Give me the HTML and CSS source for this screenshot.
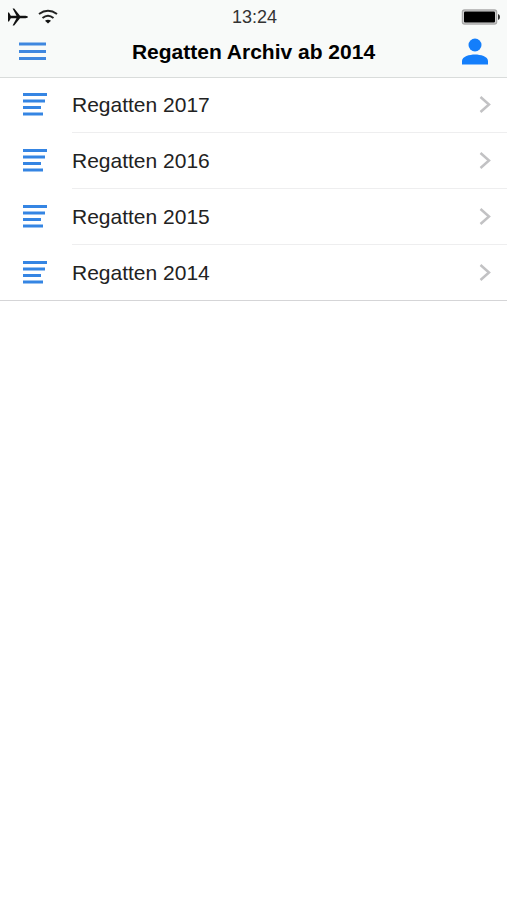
FILE: index.html
```html
<!DOCTYPE html>
<html lang="de">
<head>
  <meta charset="UTF-8">
  <meta name="viewport" content="width=device-width, initial-scale=1">
  <title>Regatten Archiv ab 2014</title>
  <link rel="stylesheet" href="styles.css">
</head>
<body>
<header class="header">
  <div class="statusbar">
    <div class="status-left">
      <svg width="20" height="18" viewBox="0 0 20 18" fill="#111"><path d="M0 4.500h1L2.800 7.800h5.700L4.600.500h1.600L12 7.800h5.500q2.500.3 2.500 1.200t-2.500 1.200H12L6.200 17.500H4.600l3.900-7.300H2.800L1 13.500H0z"/></svg>
      <svg width="20" height="16" viewBox="0 0 20 16" fill="none" stroke="#222" stroke-width="2"><path d="M1 5Q10-1.500 19 5M4.500 9Q10 4.500 15.500 9"/><path d="M10 14.500L7 11.800Q10 9.500 13 11.800z" fill="#111" stroke="none"/></svg>
    </div>
    <div class="time">13:24</div>
    <div class="status-right">
      <svg width="40" height="16" viewBox="0 0 40 16"><rect x="1.500" y="1" width="34" height="14" rx="2" fill="#ddd" stroke="#aaa" stroke-width="1.500"/><rect x="3" y="2.500" width="31" height="11" rx="1" fill="#000"/><path d="M37 5q2 .5 2 3t-2 3z" fill="#333"/></svg>
    </div>
  </div>
  <div class="navbar">
    <button type="button" class="nav-btn" aria-label="Menü">
      <svg width="28" height="28" viewBox="0 0 28 28" stroke="#3f87df" stroke-width="3"><path d="M1 6h27M1 13.500h27M1 20.500h27"/></svg>
    </button>
    <h1 class="title">Regatten Archiv ab 2014</h1>
    <button type="button" class="nav-btn" aria-label="Profil">
      <svg width="28" height="28" viewBox="0 0 28 28" fill="#147efb"><circle cx="14" cy="7" r="6.500"/><path d="M1 26.500V23C1 18.500 8.500 16.500 14 16.500s13 2 13 6.500v3.500z"/></svg>
    </button>
  </div>
</header>

<!-- gemeinsames Symbol der Listeneinträge -->
<svg class="symbols" aria-hidden="true">
  <symbol id="list-icon" viewBox="0 0 26 26"><path d="M1 2.500h24M1 9h22M1 15.500h18M1 22h20" stroke="#3585e3" stroke-width="3"/></symbol>
  <symbol id="chevron" viewBox="0 0 12 18"><path d="M1.500 1L10 8.500 1.500 16" fill="none" stroke="#c2c2c4" stroke-width="2.500"/></symbol>
</svg>

<ul class="list">
  <li>
    <a class="item" href="#2017">
      <svg class="item-icon"><use href="#list-icon"/></svg>
      <span class="item-content">Regatten 2017 <svg class="chevron"><use href="#chevron"/></svg></span>
    </a>
  </li>
  <li>
    <a class="item" href="#2016">
      <svg class="item-icon"><use href="#list-icon"/></svg>
      <span class="item-content">Regatten 2016 <svg class="chevron"><use href="#chevron"/></svg></span>
    </a>
  </li>
  <li>
    <a class="item" href="#2015">
      <svg class="item-icon"><use href="#list-icon"/></svg>
      <span class="item-content">Regatten 2015 <svg class="chevron"><use href="#chevron"/></svg></span>
    </a>
  </li>
  <li>
    <a class="item" href="#2014">
      <svg class="item-icon"><use href="#list-icon"/></svg>
      <span class="item-content">Regatten 2014 <svg class="chevron"><use href="#chevron"/></svg></span>
    </a>
  </li>
</ul>
</body>
</html>
```
FILE: styles.css
```css
* { box-sizing: border-box; }
body {
  margin: 0;
  font-family: "Liberation Sans", Arial, sans-serif;
  background-color: #fff;
  color: #222;
}
svg {
  display: block;
}
.header {
  position: relative;
  padding-bottom: 7px;
  background-color: #f8faf9;
  box-shadow: 0 1px 0 #d9dcdb;
}
.statusbar {
  display: grid;
  grid-template-columns: 1fr auto 1fr;
  align-items: center;
  height: 34px;
  padding: 0 6px 0 8px;
}
.status-left {
  display: flex;
  align-items: center;
  gap: 10px;
}
.status-right {
  justify-self: end;
}
.time {
  font-size: 18px;
  color: #333;
}
.navbar {
  display: flex;
  align-items: center;
  justify-content: space-between;
  height: 36px;
  padding: 0 18px;
}
.nav-btn {
  padding: 0;
  border: none;
  background: none;
  cursor: pointer;
}
.title {
  margin: 0;
  font-size: 21px;
  font-weight: bold;
  color: #000;
}
.symbols {
  display: none;
}
.list {
  list-style: none;
  margin: 0;
  padding: 0;
  border-bottom: 1px solid #d5d5d7;
}
.item {
  display: flex;
  align-items: center;
  gap: 24px;
  padding-left: 22px;
  color: #222;
  font-size: 21px;
  text-decoration: none;
}
.item-icon {
  width: 26px;
  height: 26px;
}
.item-content {
  display: flex;
  flex: 1;
  align-items: center;
  justify-content: space-between;
  height: 56px;
  padding-right: 16px;
  border-bottom: 1px solid #eeeeef;
}
.list li:last-child .item-content {
  height: 55px;
  border-bottom: none;
}
.chevron {
  width: 12px;
  height: 18px;
}
```
